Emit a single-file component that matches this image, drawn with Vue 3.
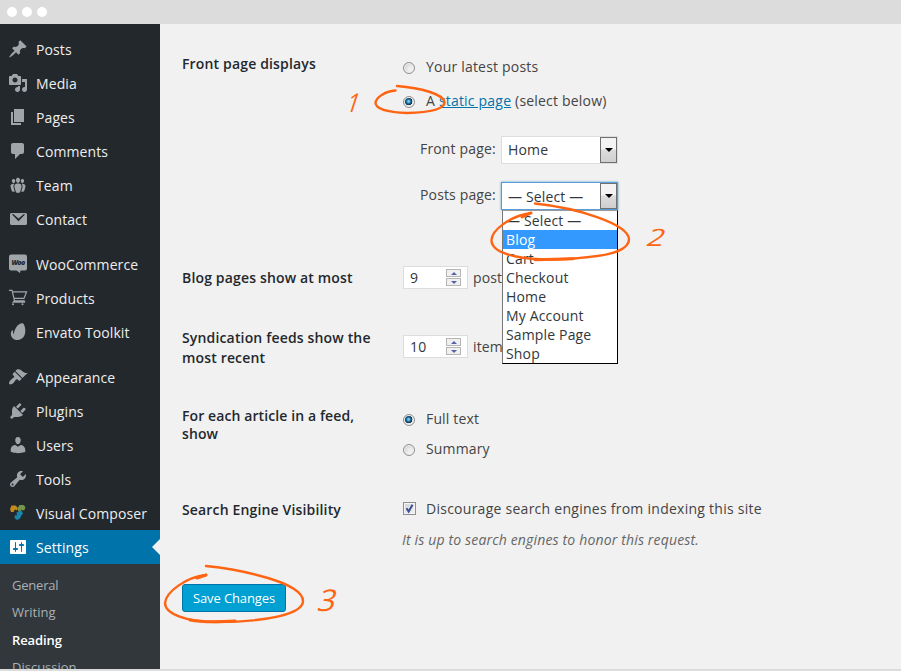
<script setup>
import { ref } from 'vue'

const groups = [
  [
    { name: 'Posts', d: 'M10.44 3.02l1.82-1.82 6.36 6.35-1.83 1.82c-1.05-.68-2.48-.57-3.41.36l-.75.75c-.92.93-1.04 2.35-.35 3.41l-1.83 1.82-2.41-2.41-2.8 2.79c-.42.42-3.38 2.71-3.8 2.29s1.86-3.39 2.28-3.81l2.79-2.79L4.1 9.36l1.83-1.82c1.05.69 2.48.57 3.4-.36l.75-.75c.93-.92 1.05-2.35.36-3.41z' },
    { name: 'Media', d: 'M13 11V4c0-.55-.45-1-1-1h-1.67L9 1H5L3.67 3H2c-.55 0-1 .45-1 1v7c0 .55.45 1 1 1h10c.55 0 1-.45 1-1zM7 4.5c1.38 0 2.5 1.12 2.5 2.5S8.38 9.5 7 9.5 4.5 8.38 4.5 7 5.62 4.5 7 4.5zM14 6h5v10.5c0 1.38-1.12 2.5-2.5 2.5S14 17.88 14 16.5s1.12-2.5 2.5-2.5c.17 0 .34.02.5.05V9h-3V6zm-4 8.05V13h2v3.5c0 1.38-1.12 2.5-2.5 2.5S7 17.88 7 16.5 8.12 14 9.5 14c.17 0 .34.02.5.05z' },
    { name: 'Pages', d: 'M6 15V2h10v13H6zm-1 1h8v2H3V5h2v11z' },
    { name: 'Comments', d: 'M5 2h9c1.1 0 2 .9 2 2v7c0 1.1-.9 2-2 2h-2l-5 5v-5H5c-1.1 0-2-.9-2-2V4c0-1.1.9-2 2-2z' },
    { name: 'Team', d: 'M8.03 4.46c-.29 1.28.55 3.46 1.97 3.46 1.41 0 2.25-2.18 1.96-3.46-.22-.98-1.08-1.63-1.96-1.63-.89 0-1.74.65-1.97 1.63zm-4.13.9c-.25 1.08.47 2.93 1.67 2.93s1.92-1.85 1.67-2.93c-.19-.83-.92-1.39-1.67-1.39s-1.48.56-1.67 1.39zm8.86 0c-.25 1.08.47 2.93 1.66 2.93 1.2 0 1.92-1.85 1.67-2.93-.19-.83-.92-1.39-1.67-1.39-.74 0-1.47.56-1.66 1.39zm-.59 11.43l1.25-4.3C14.2 10 12.71 8.47 10 8.47c-2.72 0-4.21 1.53-3.44 4.02l1.26 4.3C8.05 17.51 9 18 10 18c.98 0 1.94-.49 2.17-1.21zm-6.1-7.63c-.49.67-.96 1.83-.42 3.59l1.12 3.79c-.34.2-.77.31-1.2.31-.85 0-1.65-.41-1.85-1.03l-1.07-3.65c-.65-2.11.61-3.4 2.92-3.4.27 0 .54.02.79.06-.1.1-.2.22-.29.33zm8.35-.39c2.31 0 3.58 1.29 2.92 3.4l-1.07 3.65c-.2.62-1 1.03-1.85 1.03-.43 0-.86-.11-1.2-.31l1.11-3.77c.55-1.78.08-2.94-.42-3.61-.08-.11-.18-.23-.28-.33.25-.04.51-.06.79-.06z' },
    { name: 'Contact', d: 'M3 4h15l1 1v10l-1 1H3l-1-1V5zM4 5.6l6.5 6.6L17 5.6l-1.2-.5-5.3 4.5-5.3-4.5z' },
  ],
  [
    { name: 'WooCommerce', kind: 'woo' },
    { name: 'Products', kind: 'cart' },
    { name: 'Envato Toolkit', d: 'M14.8 1.2c1.7.8 3.7 7.4 1.7 12.1-2.2 5.3-8.3 5.5-11 3.6C2.4 14.8 2.2 10.7 4 8.6c.6-.6 1-.3 1 .4-.1 1.6.2 2.5.6 3.5C6.4 6.4 10.5.5 14.8 1.2z' },
  ],
  [
    { name: 'Appearance', d: 'M14.48 11.06L7.41 3.99l1.5-1.5c.5-.56 2.3-.47 3.51.32 1.21.8 1.43 1.28 2.91 2.1 1.18.64 2.45 1.26 4.45.85zm-.71.71L6.7 4.7 4.93 6.47c-.39.39-.39 1.02 0 1.41l1.06 1.06c.39.39.39 1.03 0 1.42-.6.6-1.43 1.11-2.21 1.69-.35.26-.7.53-1.01.84C1.43 14.23.4 16.08 1.4 17.07c.99 1 2.84-.03 4.18-1.36.31-.31.58-.66.85-1.02.57-.78 1.08-1.61 1.69-2.21.39-.39 1.02-.39 1.41 0l1.06 1.06c.39.39 1.02.39 1.41 0z' },
    { name: 'Plugins', d: 'M13.11 4.36L9.87 7.6 8 5.73l3.24-3.24c.35-.34 1.05-.2 1.56.32.52.51.66 1.21.31 1.55zm-8 1.77l.91-1.12 9.01 9.01-1.19.84c-.71.71-2.63 1.16-3.82 1.16H6.14L4.9 17.26c-.59.59-1.54.59-2.12 0-.59-.58-.59-1.53 0-2.12l1.24-1.24v-3.88c0-1.13.4-3.19 1.09-3.89zm7.26 3.97l3.24-3.24c.34-.35 1.04-.21 1.55.31.52.51.66 1.21.31 1.55l-3.24 3.25z' },
    { name: 'Users', d: 'M10 9.25c-2.27 0-2.73-3.44-2.73-3.44C7 4.02 7.82 2 9.97 2c2.16 0 2.98 2.02 2.71 3.81 0 0-.41 3.44-2.68 3.44zm0 2.57L12.72 10c2.39 0 4.52 2.33 4.52 4.53v2.49s-3.65 1.13-7.24 1.13c-3.65 0-7.24-1.13-7.24-1.13v-2.49c0-2.25 1.94-4.48 4.47-4.48z' },
    { name: 'Tools', d: 'M16.68 9.77c-1.34 1.34-3.3 1.67-4.95.99l-5.41 6.52c-.99.99-2.59.99-3.58 0s-.99-2.59 0-3.57l6.52-5.42c-.68-1.65-.35-3.61.99-4.95 1.28-1.28 3.12-1.62 4.72-1.06l-2.89 2.89 2.82 2.82 2.86-2.87c.53 1.58.18 3.39-1.08 4.65zM3.81 16.21c.4.39 1.04.39 1.43 0 .4-.4.4-1.04 0-1.43-.39-.4-1.03-.4-1.43 0-.39.39-.39 1.03 0 1.43z' },
    { name: 'Visual Composer', kind: 'vc' },
    { name: 'Settings', current: true, d: 'M18 16V4c0-.55-.45-1-1-1H3c-.55 0-1 .45-1 1v12c0 .55.45 1 1 1h14c.55 0 1-.45 1-1zM8 11h1c.55 0 1 .45 1 1s-.45 1-1 1H8v1.5c0 .28-.22.5-.5.5s-.5-.22-.5-.5V13H6c-.55 0-1-.45-1-1s.45-1 1-1h1V5.5c0-.28.22-.5.5-.5s.5.22.5.5V11zm5-2h-1c-.55 0-1-.45-1-1s.45-1 1-1h1V5.5c0-.28.22-.5.5-.5s.5.22.5.5V7h1c.55 0 1 .45 1 1s-.45 1-1 1h-1v5.5c0 .28-.22.5-.5.5s-.5-.22-.5-.5V9z' },
  ],
]
const submenu = ['General', 'Writing', 'Reading', 'Discussion']
const options = ['— Select —', 'Blog', 'Cart', 'Checkout', 'Home', 'My Account', 'Sample Page', 'Shop']
const hovered = ref('Blog')
const source = ref('page')
const feed = ref('full')
const discourage = ref(true)
</script>

<template>
  <div class="window">
    <header class="titlebar"><i></i><i></i><i></i></header>
    <div class="body">
      <nav class="sidebar">
        <ul v-for="(group, g) in groups" :key="g" class="group">
          <li v-for="item in group" :key="item.name" class="item" :class="{ current: item.current }">
            <svg class="icon" viewBox="0 0 20 20" width="20" height="20">
              <template v-if="item.kind === 'woo'">
                <path d="M3 .5h14q2 0 2 2v12q0 2-2 2h-4.500l-.5 2.500-3.500-2.500H3q-2 0-2-2v-12q0-2 2-2z" />
                <text class="woo" x="10" y="11" text-anchor="middle">Woo</text>
              </template>
              <g v-else-if="item.kind === 'cart'" class="cart">
                <path d="M1 2.300h3l2.600 10.500h10.200M4.600 3.800h14l-2.600 6.600H6M6.500 12.600l-1.300 1.500h12" />
                <circle cx="5" cy="16.300" r="1" /><circle cx="14.500" cy="16.300" r="1" />
              </g>
              <template v-else-if="item.kind === 'vc'">
                <path class="vc-a" d="M2 6l1.500-3.500h4L10 5l-1 2.500-2-1L5.500 9H3z" />
                <path class="vc-b" d="M10 4.500L11.500 2h4L17.500 4l-1 3-2 .5-1-1-2 2.500L10 8z" />
                <path class="vc-c" d="M8.500 9.500l3-1 2-1 1.500 3-2 2.500-1 2.500-3 1.500-2.500-2 .5-3 2 .5z" />
              </template>
              <path v-else fill-rule="evenodd" :d="item.d" />
            </svg>
            <span>{{ item.name }}</span>
          </li>
        </ul>
        <ul class="submenu">
          <li v-for="s in submenu" :key="s" :class="{ active: s === 'Reading' }">{{ s }}</li>
        </ul>
      </nav>

      <main class="content">
        <section class="row front">
          <h4>Front page displays</h4>
          <div class="field">
            <label class="choice"><i class="radio" :class="{ on: source === 'posts' }" @click="source = 'posts'"></i>Your latest posts</label>
            <label class="choice"><i class="radio" :class="{ on: source === 'page' }" @click="source = 'page'"></i><span>A <a>static page</a> (select below)</span></label>
            <div class="pick first">
              <span>Front page:</span>
              <div class="select"><span>Home</span><b class="arrow"></b></div>
            </div>
            <div class="pick">
              <span>Posts page:</span>
              <div class="select open">
                <span>— Select —</span><b class="arrow"></b>
                <ul class="options">
                  <li v-for="o in options" :key="o" :class="{ hot: o === hovered }" @mouseenter="hovered = o">{{ o }}</li>
                </ul>
              </div>
            </div>
          </div>
        </section>

        <section class="row blog">
          <h4>Blog pages show at most</h4>
          <div class="field amount"><div class="number"><span>9</span><b class="spin"><i></i><i></i></b></div>posts</div>
        </section>

        <section class="row syndication">
          <h4>Syndication feeds show the most recent</h4>
          <div class="field amount"><div class="number"><span>10</span><b class="spin"><i></i><i></i></b></div>items</div>
        </section>

        <section class="row article">
          <h4>For each article in a feed, show</h4>
          <div class="field">
            <label class="choice"><i class="radio" :class="{ on: feed === 'full' }" @click="feed = 'full'"></i>Full text</label>
            <label class="choice"><i class="radio" :class="{ on: feed === 'summary' }" @click="feed = 'summary'"></i>Summary</label>
          </div>
        </section>

        <section class="row search">
          <h4>Search Engine Visibility</h4>
          <div class="field">
            <label class="choice discourage">
              <i class="check" @click="discourage = !discourage">
                <svg v-if="discourage" viewBox="0 0 13 13" width="13" height="13"><path d="M3.500 6.200l2.200 3.300L9.500 2.800" /></svg>
              </i>Discourage search engines from indexing this site
            </label>
            <p>It is up to search engines to honor this request.</p>
          </div>
        </section>

        <button class="save">Save Changes</button>
      </main>
    </div>
    <footer class="bottom"></footer>

    <svg class="notes" viewBox="0 0 901 671" width="901" height="671">
      <path d="M397 86C421 88 443 94 444.500 102C444.500 109 430 112.500 407 113C389 112.500 376 109 375.500 103C376 97 386 91 395.500 90.500" />
      <path d="M535 203.500C578 208 628 224 629 239C629 254 596 257 567 259C529 261 491 256 491.500 240C492 230 510 216 531 213" />
      <path d="M206 566C244 570 303 583 303 601C303 614 267 622 216 622C187 622 165 614 165 603C166 592 186 577 206 575" />
      <path class="tail" d="M531 213l-9 4M206 575l-9 3M535 259.800l38-1M190 620q15 3 45 1" />
      <text transform="translate(344.500 112) skewX(-18) scale(.85 1)" font-size="26">1</text>
      <text transform="translate(645 246) skewX(-20) scale(1.250 1)" font-size="24">2</text>
      <text transform="translate(316 611) skewX(-16) scale(1.030 1)" font-size="30">3</text>
    </svg>
  </div>
</template>

<style>
body { margin: 0; background: #f1f1f1; overflow: hidden; }
</style>

<style scoped>
* { box-sizing: border-box; }
ul { list-style: none; margin: 0; padding: 0; }
.window { position: relative; width: 901px; height: 671px; display: flex; flex-direction: column; overflow: hidden; font: 14px/20px "Open Sans", sans-serif; color: #444; background: #f1f1f1; }
.titlebar { height: 24px; flex: none; background: #dcdcdc; display: flex; align-items: center; gap: 5px; padding-left: 7px; }
.titlebar i { width: 10px; height: 10px; border-radius: 50%; background: #fff; }
.body { flex: 1; min-height: 0; display: flex; }
.bottom { height: 2px; flex: none; background: #dcdcdc; }

.sidebar { width: 160px; flex: none; background: #23282d; padding-top: 8px; overflow: hidden; }
.group + .group { margin-top: 11px; }
.item { height: 34px; display: flex; align-items: center; gap: 8px; padding-left: 8px; color: #eee; white-space: nowrap; letter-spacing: .1px; }
.item span { padding-top: 2px; }
.icon { fill: #a0a5aa; flex: none; }
.current { position: relative; background: #0073aa; color: #fff; }
.current .icon { fill: #fff; }
.current::after { content: ""; position: absolute; right: 0; top: 9px; border: 8px solid transparent; border-left-width: 0; border-right-color: #f1f1f1; }
.woo { font: italic 800 7px "Open Sans", sans-serif; letter-spacing: -.6px; fill: #23282d; }
.cart { fill: #a0a5aa; }
.cart path { fill: none; stroke: #a0a5aa; stroke-width: 1.2; }
.vc-a { fill: #c58a1e; }
.vc-b { fill: #74964a; }
.vc-c { fill: #1686b0; }
.submenu { background: #32373c; height: 110px; padding: 8px 0 0 12px; font-size: 13px; color: #a9b0b6; }
.submenu li { height: 27.4px; line-height: 27px; }
.submenu li:first-child { letter-spacing: -.2px; }
.submenu .active { color: #fff; font-weight: 600; letter-spacing: -.1px; }

.content { flex: 1; padding-left: 22px; }
.row { display: grid; grid-template-columns: 221px 1fr; }
h4 { margin: 0; font-size: 14px; line-height: 20px; font-weight: 600; color: #23282d; width: 200px; letter-spacing: .16px; }
.front { height: 230px; padding-top: 30px; }
.front .field { padding-top: 3px; }
.choice { display: flex; align-items: center; gap: 11px; height: 20px; letter-spacing: .2px; }
.choice + .choice { margin-top: 14px; }
a { color: #0073aa; text-decoration: underline; }
.radio { width: 12px; height: 12px; border-radius: 50%; border: 1px solid #8e8f8f; background: radial-gradient(circle at 65% 65%, #eee 0 25%, #cfd0d2 75%); box-shadow: inset 0 0 0 1px #f4f4f4; flex: none; }
.radio.on { background: radial-gradient(circle at 46% 44%, #7fd0f0 0 8%, #1b6e9d 28%, #0c2c45 46%, #e4e4e4 52%); }
.front .radio, .article .radio { margin-top: 1px; }
.pick { display: flex; align-items: center; gap: 5px; margin-top: 18px; padding-left: 17px; height: 28px; letter-spacing: .15px; }
.pick.first { margin-top: 24px; }
.pick > span { width: 76px; white-space: nowrap; }
.select { position: relative; width: 117px; height: 28px; flex: none; margin-top: 2px; border: 1px solid #ddd; background: #fff; display: flex; align-items: center; justify-content: space-between; padding-left: 6px; color: #32373c; }
.pick.first .select span { padding-bottom: 1px; }
.select.open > span { padding-top: 2px; }
.arrow { width: 17px; height: 26px; border: 1px solid #707070; background: linear-gradient(#f3f3f3 45%, #dcdcdc 50%, #cfcfcf); display: grid; place-items: center; }
.arrow::after { content: ""; border: 4px solid transparent; border-top-color: #000; border-bottom: 0; }
.select.open { border-color: #5b9dd9; box-shadow: 0 0 2px rgba(30, 140, 190, .8); }
.options { position: absolute; z-index: 2; left: 0; top: 27px; width: 116px; height: 154px; padding: 0; background: #fff; border: 1px solid #000; border-left-color: #777; border-top-color: #999; }
.options li { height: 19px; line-height: 19px; padding-left: 3px; white-space: nowrap; }
.options .hot { background: #3399ff; color: #fff; }

.blog { height: 70px; padding-top: 14px; }
.blog .amount { margin-top: -2px; }
.amount { display: flex; align-items: center; gap: 6px; height: 23px; letter-spacing: .15px; }
.number { width: 65px; height: 23px; border: 1px solid #ddd; background: #fff; display: flex; align-items: center; justify-content: space-between; padding: 0 6px; color: #32373c; margin-right: -1px; }
.spin { width: 15px; height: 17px; display: grid; gap: 1px; }
.spin i { border: 1px solid #b5b5b5; background: #f0f0f0; display: grid; place-items: center; }
.spin i::after { content: ""; border: 3px solid transparent; border-bottom: 3px solid #5264a8; border-top: 0; }
.spin i:last-child::after { transform: rotate(180deg); }
.syndication { height: 82px; padding-top: 4px; }
.syndication .amount { margin-top: 7px; }
.article { height: 94px; }
.article h4 { line-height: 18px; padding-top: 1px; letter-spacing: .1px; }
.article .field { padding-top: 3px; }
.article .choice { letter-spacing: .15px; }
.article .choice + .choice { margin-top: 10px; }
.search { height: 84px; }
.choice.discourage { margin-top: -1px; letter-spacing: .26px; }
.check { width: 13px; height: 13px; border: 1px solid #8e8f8f; background: linear-gradient(135deg, #cfd3d8, #f5f5f5); box-shadow: inset 0 0 0 1px #f4f4f4; flex: none; margin-right: -1px; position: relative; top: -1px; }
.check svg { display: block; margin: -1px; fill: none; stroke: #3c4d94; stroke-width: 2; }
p { margin: 11px 0 0 -1px; font-style: italic; color: #666; letter-spacing: .16px; }
.save { display: block; width: 104px; height: 28px; padding: 0; border: 1px solid #0073aa; border-radius: 3px; background: #00a0d2; color: #fff; font: 13px "Open Sans", sans-serif; letter-spacing: -.1px; white-space: nowrap; }

.notes { position: absolute; inset: 0; z-index: 5; pointer-events: none; }
.notes path { fill: none; stroke: #ff6412; stroke-width: 2.4; stroke-linecap: round; }
.notes .tail { stroke-width: 3; }
.notes text { fill: #ff6412; font-family: "Open Sans", sans-serif; }
</style>
